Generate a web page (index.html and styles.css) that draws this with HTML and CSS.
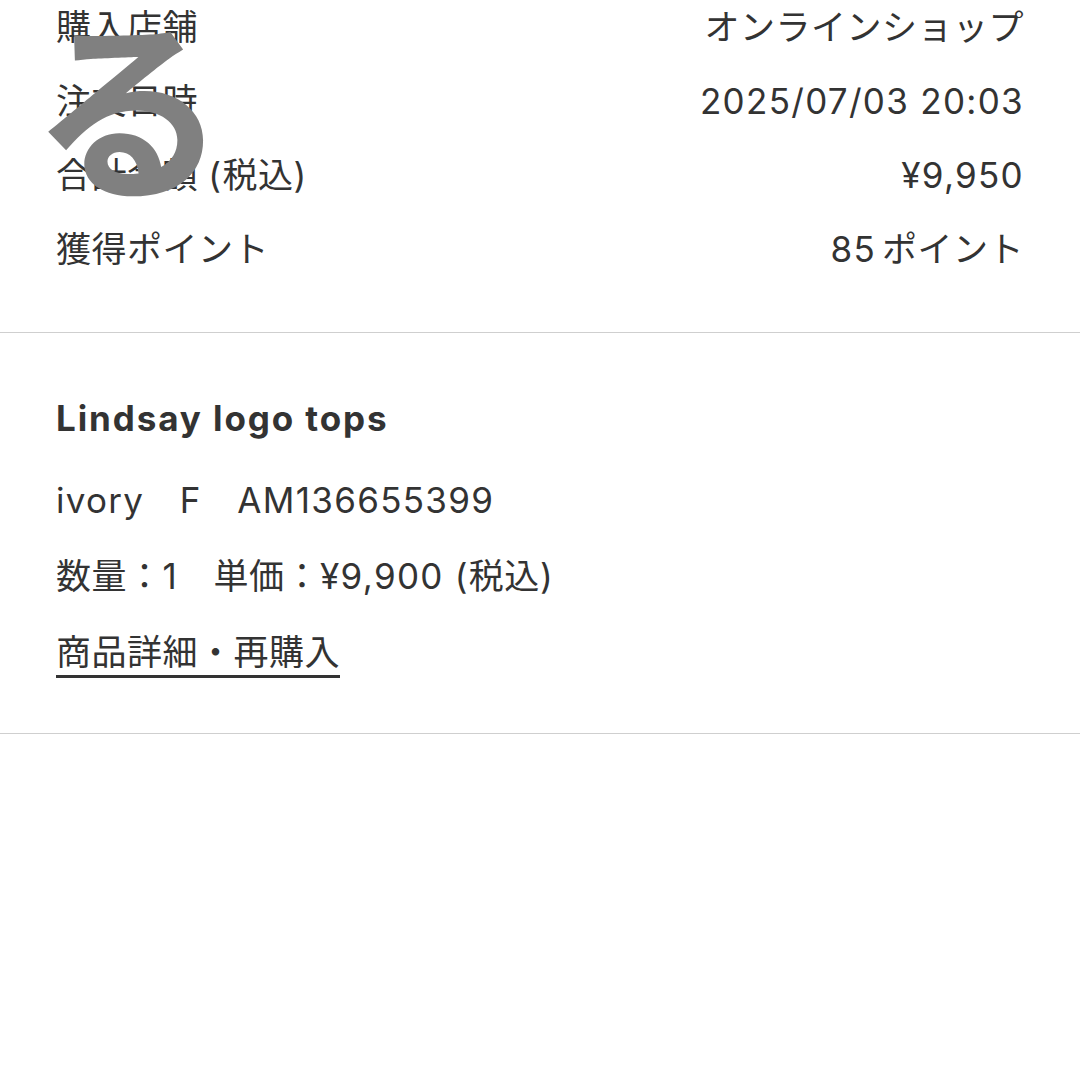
FILE: index.html
```html
<!DOCTYPE html>
<html lang="ja">
<head>
<meta charset="utf-8">
<link rel="stylesheet" href="styles.css">
</head>
<body>
<div class="page">
  <section class="summary">
    <div class="row"><span>購入店舗</span><span>オンラインショップ</span></div>
    <div class="row"><span>注文日時</span><span class="en">2025/07/03 20:03</span></div>
    <div class="row"><span>合計金額 <span class="en">(</span>税込<span class="en">)</span></span><span class="en">¥9,950</span></div>
    <div class="row"><span>獲得ポイント</span><span><span class="en pts">85</span>ポイント</span></div>
  </section>
  <section class="item">
    <div class="title">Lindsay logo tops</div>
    <div class="line"><span class="en">ivory</span>　<span class="en">F</span>　<span class="en">AM136655399</span></div>
    <div class="line">数量：<span class="en">1</span>　単価：<span class="en">¥9,900 (</span>税込<span class="en">)</span></div>
    <div class="line"><a class="link" href="#">商品詳細・再購入</a></div>
  </section>
  <div class="mark">る</div>
</div>
</body>
</html>
```

FILE: styles.css
```css
html, body {
  margin: 0;
  padding: 0;
  background: #fff;
}
.page {
  position: relative;
  width: 1080px;
  height: 1080px;
  overflow: hidden;
  font-family: "Inter", "Noto Sans CJK JP", sans-serif;
  font-size: 35px;
  letter-spacing: 0.5px;
  color: #333;
}
.en {
  letter-spacing: 1.3px;
}
.pts {
  margin-right: 6px;
}
.summary {
  display: flex;
  flex-direction: column;
  gap: 20px;
  padding: 0 56px 56px 56px;
  border-bottom: 1.5px solid #cfcfcf;
}
.row {
  display: flex;
  justify-content: space-between;
  line-height: 54px;
}
.item {
  display: flex;
  flex-direction: column;
  align-items: flex-start;
  padding: 58px 56px 54px 56px;
  border-bottom: 1.5px solid #cfcfcf;
}
.title {
  font-weight: 700;
  line-height: 54px;
  letter-spacing: 1.9px;
  margin-bottom: 28px;
}
.line {
  line-height: 54px;
  margin-bottom: 22px;
}
.line:last-child {
  margin-bottom: 0;
}
.link {
  display: inline-block;
  color: #333;
  text-decoration: none;
  line-height: 46px;
  border-bottom: 3px solid #333;
}
.mark {
  position: absolute;
  left: 31px;
  top: 1px;
  font-family: "Noto Sans CJK JP", sans-serif;
  font-size: 196px;
  font-weight: 700;
  letter-spacing: 0;
  line-height: 1;
  color: #808080;
}
```
